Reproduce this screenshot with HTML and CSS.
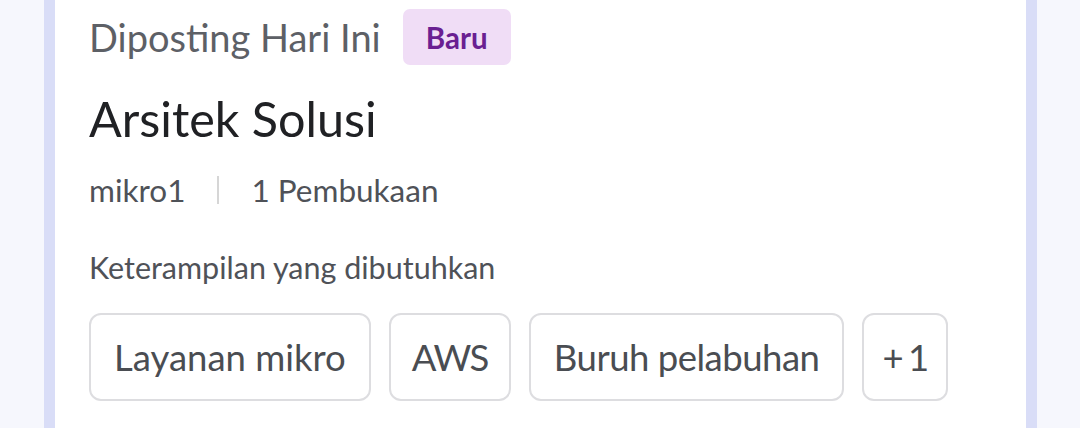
FILE: index.html
```html
<!DOCTYPE html>
<html lang="id">
<head>
<meta charset="utf-8">
<link rel="stylesheet" href="styles.css">
</head>
<body>
<div class="page">
  <div class="card">
    <div class="posted-row">
      <span class="posted">Diposting Hari Ini</span>
      <span class="badge">Baru</span>
    </div>
    <h1 class="title">Arsitek Solusi</h1>
    <div class="meta">
      <span class="company">mikro1</span>
      <span class="sep"></span>
      <span class="openings">1 Pembukaan</span>
    </div>
    <div class="skills-label">Keterampilan yang dibutuhkan</div>
    <div class="chips">
      <span class="chip">Layanan mikro</span>
      <span class="chip chip-narrow">AWS</span>
      <span class="chip chip-tight">Buruh pelabuhan</span>
      <span class="chip chip-more">+ 1</span>
    </div>
  </div>
</div>
</body>
</html>
```
FILE: styles.css
```css
html, body {
  margin: 0;
  padding: 0;
  background: #f6f7fd;
  font-family: "Lato", "Noto Sans", sans-serif;
}
.page {
  height: 428px;
  overflow: hidden;
  padding-left: 44px;
  width: 993px;
}
.card {
  background: #ffffff;
  border-left: 11px solid #d9ddf7;
  border-right: 11px solid #d9ddf7;
  padding: 9px 34px 40px 34px;
  min-height: 500px;
}
.posted-row {
  display: flex;
  align-items: center;
  gap: 22px;
  height: 56px;
}
.posted {
  font-size: 38px;
  color: #5d6066;
}
.badge {
  height: 56px;
  box-sizing: border-box;
  display: flex;
  align-items: center;
  padding: 0 23px;
  border-radius: 7px;
  background: #f0ddf6;
  color: #6a1f92;
  font-size: 29.5px;
  font-weight: 700;
}
.title {
  margin: 26px 0 0 0;
  font-size: 48.5px;
  font-weight: 400;
  line-height: 54px;
  color: #202124;
}
.meta {
  margin-top: 25px;
  display: flex;
  align-items: center;
  gap: 32px;
  font-size: 31.5px;
  line-height: 40px;
  color: #4f5258;
}
.sep {
  width: 2px;
  height: 28px;
  background: #d6d6d6;
}
.skills-label {
  margin-top: 39px;
  font-size: 30.5px;
  line-height: 36px;
  color: #4f5258;
}
.chips {
  margin-top: 28px;
  display: flex;
  gap: 18px;
}
.chip {
  height: 88px;
  box-sizing: border-box;
  display: flex;
  align-items: center;
  padding: 0 23px;
  border: 2px solid #dddde0;
  border-radius: 12px;
  font-size: 36.5px;
  color: #4a4d52;
}
.chip-narrow {
  padding: 0 21px;
  letter-spacing: -1.5px;
}
.chip-tight {
  letter-spacing: -0.5px;
}
.chip-more {
  padding: 0 18px;
  word-spacing: -3px;
  letter-spacing: -1px;
}
```
